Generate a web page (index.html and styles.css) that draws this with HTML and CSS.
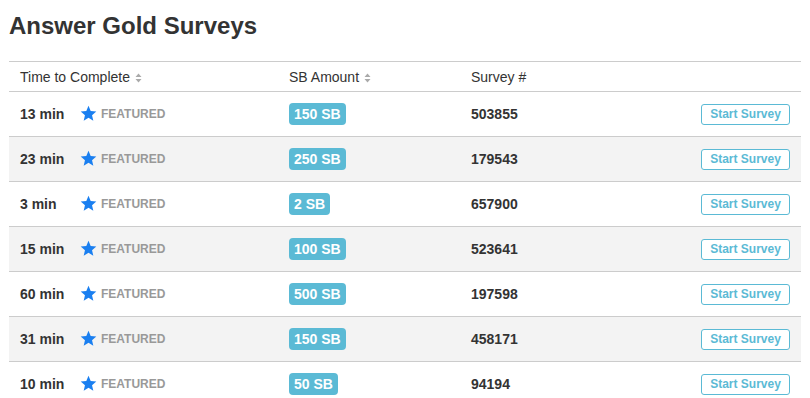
FILE: index.html
```html
<!DOCTYPE html>
<html>
<head>
<meta charset="utf-8">
<link rel="stylesheet" href="styles.css">
</head>
<body>
<h1 class="title">Answer Gold Surveys</h1>
<table class="surveys">
  <colgroup>
    <col class="c1"><col class="c2"><col class="c3"><col class="c4">
  </colgroup>
  <thead>
    <tr>
      <th>Time to Complete <span class="sort"><svg width="7" height="10" viewBox="0 0 7 10"><path d="M3.5 0.5L6.5 4H0.5Z M3.5 9.5L6.5 6H0.5Z" fill="#aaa"/></svg></span></th>
      <th>SB Amount <span class="sort"><svg width="7" height="10" viewBox="0 0 7 10"><path d="M3.5 0.5L6.5 4H0.5Z M3.5 9.5L6.5 6H0.5Z" fill="#aaa"/></svg></span></th>
      <th>Survey #</th>
      <th></th>
    </tr>
  </thead>
  <tbody id="rows"></tbody>
</table>
<script>
const data = [
  ["13 min","150 SB","503855"],
  ["23 min","250 SB","179543"],
  ["3 min","2 SB","657900"],
  ["15 min","100 SB","523641"],
  ["60 min","500 SB","197598"],
  ["31 min","150 SB","458171"],
  ["10 min","50 SB","94194"]
];
const star = '<svg class="star" width="17" height="17" viewBox="0 0 24 24"><path d="M12 1.2l3.1 7.3 7.9.7-6 5.2 1.8 7.8L12 18.1l-6.8 4.1 1.8-7.8-6-5.2 7.9-.7z" fill="#1a7ff0"/></svg>';
const tb = document.getElementById('rows');
tb.innerHTML = data.map(d => `<tr>
  <td><span class="time">${d[0]}</span>${star}<span class="feat">FEATURED</span></td>
  <td><span class="badge">${d[1]}</span></td>
  <td class="num">${d[2]}</td>
  <td class="act"><button class="btn">Start Survey</button></td>
</tr>`).join('');
</script>
</body>
</html>
```

FILE: styles.css
```css
html, body {
  margin: 0;
  padding: 0;
  background: #fff;
}
body {
  font-family: "Liberation Sans", Arial, Helvetica, sans-serif;
  color: #333;
  padding: 0 9px;
}
.title {
  font-size: 24px;
  font-weight: bold;
  margin: 0;
  padding: 12px 0 0 0;
  height: 61px;
  box-sizing: border-box;
  line-height: 28px;
  color: #333;
}
.surveys {
  width: 792px;
  border-collapse: collapse;
  table-layout: fixed;
  font-size: 14px;
}
.c1 { width: 269px; }
.c2 { width: 182px; }
.c3 { width: 200px; }
.c4 { width: 141px; }
.surveys th {
  text-align: left;
  font-weight: normal;
  height: 29px;
  padding: 0 11px;
  border-top: 1px solid #ccc;
  border-bottom: 1px solid #ccc;
  vertical-align: middle;
  white-space: nowrap;
}
.sort {
  display: inline-block;
  vertical-align: -1px;
  margin-left: 1px;
}
.sort svg { display: block; }
.surveys td {
  height: 44px;
  padding: 0 11px;
  border-bottom: 1px solid #ccc;
  vertical-align: middle;
  font-weight: bold;
  white-space: nowrap;
}
.surveys tbody tr:nth-child(even) td {
  background: #f3f3f3;
}
.surveys tbody tr:last-child td {
  border-bottom: none;
}
.time {
  display: inline-block;
  width: 60px;
  vertical-align: middle;
}
.star {
  vertical-align: middle;
  margin-right: 4px;
  position: relative;
  top: -1px;
}
.feat {
  color: #999;
  font-size: 12px;
  vertical-align: middle;
}
.badge {
  display: inline-block;
  background: #5bbad5;
  color: #fff;
  font-size: 14px;
  font-weight: bold;
  padding: 0 5px;
  height: 22px;
  line-height: 22px;
  border-radius: 4px;
}
.act {
  text-align: right;
  padding-right: 10px;
}
.btn {
  font-family: "Liberation Sans", Arial, sans-serif;
  font-weight: bold;
  font-size: 12px;
  color: #5bbad5;
  background: #fff;
  border: 1px solid #5bbad5;
  border-radius: 3px;
  width: 89px;
  height: 21px;
  padding: 0;
  line-height: 19px;
}
```
